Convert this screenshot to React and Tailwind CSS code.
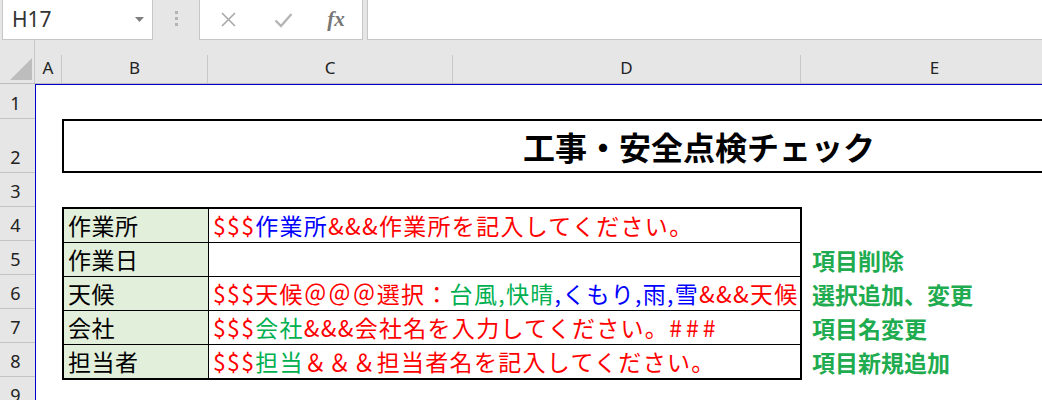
const RED = "text-[#ff0000]";
const BLUE = "text-[#0000ff]";
const GREEN = "text-[#00b050]";

const rows = [
  {
    label: "作業所",
    parts: [
      ["$$$", RED],
      ["作業所", BLUE],
      ["&&&作業所を記入してください。", RED],
    ],
    note: null,
  },
  { label: "作業日", parts: [], note: "項目削除" },
  {
    label: "天候",
    parts: [
      ["$$$天候＠＠＠選択：", RED],
      ["台風,快晴", GREEN],
      [",くもり,雨,雪", BLUE],
      ["&&&天候を選択してください。", RED],
    ],
    note: "選択追加、変更",
  },
  {
    label: "会社",
    parts: [
      ["$$$", RED],
      ["会社", GREEN],
      ["&&&会社名を入力してください。", RED],
      ["###", RED + " tracking-[4px]"],
    ],
    note: "項目名変更",
  },
  {
    label: "担当者",
    parts: [
      ["$$$", RED],
      ["担当", GREEN],
      ["＆＆＆担当者名を記入してください。", RED],
    ],
    note: "項目新規追加",
  },
];

const columns = [
  { name: "A", w: "w-[27px]" },
  { name: "B", w: "w-[146px]" },
  { name: "C", w: "w-[245px]" },
  { name: "D", w: "w-[348px]" },
  { name: "E", w: "w-[268px]" },
];

const rowHeaders = [
  { n: 1, h: "h-[35px]" },
  { n: 2, h: "h-[54px]" },
  { n: 3, h: "h-[34px]" },
  { n: 4, h: "h-[34px]" },
  { n: 5, h: "h-[34px]" },
  { n: 6, h: "h-[34px]" },
  { n: 7, h: "h-[34px]" },
  { n: 8, h: "h-[34px]" },
  { n: 9, h: "h-[34px]" },
];

function FormulaBar() {
  return (
    <div className="flex h-[40px] bg-[#e6e6e6]">
      <div className="ml-[2px] flex h-[40px] w-[151px] items-center justify-between border-x border-b border-[#c6c6c6] bg-white pl-[9px] pr-[8px]">
        <span className="text-[21px] text-[#333] font-['Noto_Sans',sans-serif]">H17</span>
        <svg width="9" height="5" viewBox="0 0 9 5">
          <polygon points="0,0 9,0 4.5,5" fill="#7f7f7f" />
        </svg>
      </div>
      <div className="flex w-[46px] flex-col items-center gap-[3px] pt-[11px]">
        <div className="h-[3px] w-[3px] bg-[#b3b3b3]" />
        <div className="h-[3px] w-[3px] bg-[#b3b3b3]" />
        <div className="h-[3px] w-[3px] bg-[#b3b3b3]" />
      </div>
      <div className="flex h-[40px] w-[164px] items-center border-x border-b border-[#c6c6c6] bg-white">
        <div className="flex w-[56px] justify-center">
          <svg width="17" height="17" viewBox="0 0 17 17">
            <path d="M2 2 L15 15 M15 2 L2 15" stroke="#a8a8a8" strokeWidth="1.6" />
          </svg>
        </div>
        <div className="flex w-[54px] justify-center">
          <svg width="19" height="16" viewBox="0 0 19 16">
            <path d="M1.5 8.5 L7 14 L17.5 2" stroke="#b5b5b5" strokeWidth="2.4" fill="none" />
          </svg>
        </div>
        <div className="flex w-[52px] justify-center">
          <span className="font-['Liberation_Serif',serif] text-[21px] font-bold italic text-[#777]">fx</span>
        </div>
      </div>
      <div className="ml-[4px] h-[40px] flex-1 border-b border-l border-[#c6c6c6] bg-white" />
    </div>
  );
}

function ColumnHeaders() {
  return (
    <div className="flex h-[44px] border-b border-[#bdbdbd] bg-[#e6e6e6] font-['Noto_Sans',sans-serif]">
      <div className="relative w-[35px] shrink-0 border-r border-[#c8c8c8]">
        <svg className="absolute left-[10px] top-[18px]" width="22" height="22" viewBox="0 0 22 22">
          <polygon points="22,0 22,22 0,22" fill="#bdbdbd" />
        </svg>
      </div>
      {columns.map((c) => (
        <div key={c.name} className={`${c.w} flex shrink-0 items-end`}>
          <div className="flex h-[28px] w-full items-center justify-center border-r border-[#c8c8c8] pb-[2px] text-[17px] text-[#222]">
            {c.name}
          </div>
        </div>
      ))}
    </div>
  );
}

function RowHeaders() {
  return (
    <div className="w-[35px] shrink-0 bg-[#e6e6e6] font-['Noto_Sans',sans-serif]">
      {rowHeaders.map((r) => (
        <div
          key={r.n}
          className={`${r.h} flex items-end justify-center border-b border-[#c4c4c4] pb-[3px] pr-[4px] text-[18px] leading-[24px] text-[#222]`}
        >
          {r.n}
        </div>
      ))}
    </div>
  );
}

function Sheet() {
  return (
    <div className="flex-1 border-l border-t border-[#0000c8] font-['Noto_Sans_CJK_JP',sans-serif]">
      <div className="h-[34px]" />
      <div className="ml-[26px] flex h-[54px] w-[1100px] items-center border-2 border-black pl-[459px]">
        <span className="text-[32px] font-bold leading-none text-black">工事・安全点検チェック</span>
      </div>
      <div className="h-[34px]" />
      <div className="ml-[26px] flex">
        <div className="w-[740px] border-2 border-black">
          {rows.map((r, i) => (
            <div
              key={r.label}
              className={`flex h-[33px] ${i < rows.length - 1 ? "box-content border-b border-black" : ""}`}
            >
              <div className="flex w-[145px] shrink-0 items-center border-r border-black bg-[#e2efda] pl-[4px] text-[23px] leading-none tracking-[0.5px] text-black">
                {r.label}
              </div>
              <div className="flex min-w-0 flex-1 items-center overflow-hidden whitespace-nowrap pl-[4px] text-[23px] leading-none tracking-[1.3px]">
                {r.parts.map(([t, cls], j) => (
                  <span key={j} className={cls}>
                    {t}
                  </span>
                ))}
              </div>
            </div>
          ))}
        </div>
        <div className="ml-[10px] pt-[2px]">
          {rows.map((r) => (
            <div key={r.label} className="flex h-[34px] items-center whitespace-nowrap text-[23px] font-bold leading-none text-[#1fab4f]">
              {r.note}
            </div>
          ))}
        </div>
      </div>
    </div>
  );
}

export default function App() {
  return (
    <div className="h-[400px] w-[1042px] overflow-hidden bg-white">
      <FormulaBar />
      <ColumnHeaders />
      <div className="flex">
        <RowHeaders />
        <Sheet />
      </div>
    </div>
  );
}
